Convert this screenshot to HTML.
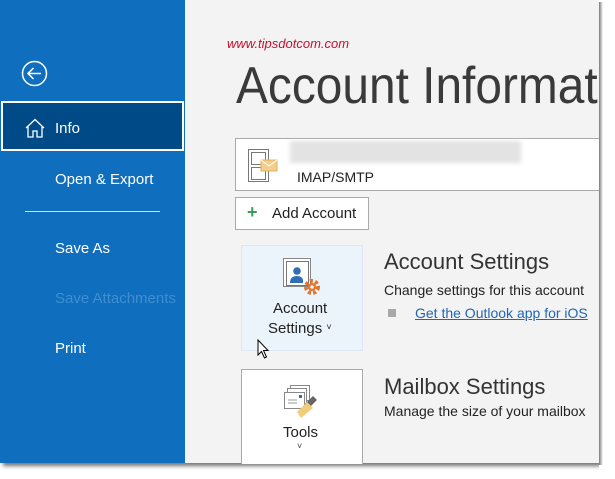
<!DOCTYPE html>
<html><head><meta charset="utf-8"><style>
*{margin:0;padding:0;box-sizing:border-box}
body{width:615px;height:479px;background:#fff;position:relative;overflow:hidden;font-family:"Liberation Sans",sans-serif}
.frame{position:absolute;left:0;top:0;width:599px;height:463px;background:#f3f3f3;box-shadow:3px 3px 4px rgba(0,0,0,.55)}
.nav{position:absolute;left:0;top:0;width:185px;height:463px;background:#106ebe}
.t{position:absolute;white-space:nowrap}
.nav .t{color:#fff;font-size:15px}
</style></head><body>
<div class="frame"></div>
<div class="nav">
<svg style="position:absolute;left:21px;top:60px" width="27" height="27" viewBox="0 0 27 27"><circle cx="13.5" cy="13.5" r="12" fill="none" stroke="#fff" stroke-width="1.5"/><path d="M7 13.5H20M12.5 8L7 13.5L12.5 19" fill="none" stroke="#fff" stroke-width="1.5"/></svg>
<div style="position:absolute;left:1px;top:101px;width:183px;height:50px;background:#004b87;border:2px solid #fff"></div>
<svg style="position:absolute;left:24px;top:117px" width="22" height="22" viewBox="0 0 22 22"><path d="M2 11L11 2.5L20 11M4 9.5V20H9V14H13V20H18V9.5" fill="none" stroke="#fff" stroke-width="1.3"/></svg>
<div class="t" style="left:55px;top:120px">Info</div>
<div class="t" style="left:55px;top:171px">Open &amp; Export</div>
<div style="position:absolute;left:25px;top:211px;width:135px;height:1px;background:#cfe3f5"></div>
<div class="t" style="left:55px;top:240px">Save As</div>
<div class="t" style="left:55px;top:290px;color:#3f8ed3">Save Attachments</div>
<div class="t" style="left:55px;top:340px">Print</div>
</div>
<div class="t" style="left:227px;top:36px;color:#c8102e;font-size:13px;font-style:italic">www.tipsdotcom.com</div>
<div style="position:absolute;left:185px;top:50px;width:414px;height:70px;overflow:hidden"><div class="t" style="left:51px;top:6px;font-size:52px;color:#3a3a3a;transform:scaleX(0.92);transform-origin:0 0">Account Informat</div></div>
<div style="position:absolute;left:235px;top:138px;width:364px;height:53px;background:#fff;border:1px solid #aaa;border-right:none"></div>
<svg style="position:absolute;left:246px;top:147px" width="36" height="38" viewBox="0 0 36 38"><rect x="2.5" y="2.5" width="20" height="32" fill="#fff" stroke="#777"/><rect x="5.5" y="5.5" width="14" height="12" fill="none" stroke="#777"/><rect x="5.5" y="20.5" width="14" height="12" fill="none" stroke="#777"/><rect x="15" y="13" width="16" height="11" fill="#f3cf8c" stroke="#e0b060"/><path d="M15 13L23 19L31 13" fill="none" stroke="#fff"/></svg>
<div style="position:absolute;left:290px;top:141px;width:231px;height:22px;background:#e3e3e3;filter:blur(2px)"></div>
<div class="t" style="left:297px;top:169px;font-size:14px;color:#222">IMAP/SMTP</div>
<div style="position:absolute;left:235px;top:197px;width:134px;height:33px;background:#fff;border:1px solid #aaa"></div>
<div class="t" style="left:247px;top:202px;font-size:18px;color:#3c9a5f;font-weight:bold">+</div>
<div class="t" style="left:272px;top:205px;font-size:15px;color:#222">Add Account</div>
<div style="position:absolute;left:241px;top:245px;width:122px;height:106px;background:#ebf3fb;border:1px solid #dce8f3"></div>
<svg style="position:absolute;left:282px;top:257px" width="42" height="42" viewBox="0 0 42 42"><rect x="1.5" y="1.5" width="27" height="28" fill="#fff" stroke="#888"/><rect x="4.5" y="4.5" width="22" height="24" fill="#fff" stroke="#777"/><circle cx="15" cy="14" r="3.8" fill="#2f6db5"/><path d="M8 26Q8 19 15 19Q20 19 21 23V26Z" fill="#2f6db5"/><circle cx="30" cy="30" r="6" fill="none" stroke="#e2752b" stroke-width="4" stroke-dasharray="3 2.2"/><circle cx="30" cy="30" r="4" fill="#e2752b"/><circle cx="30" cy="30" r="1.8" fill="#ebf3fb"/></svg>
<div class="t" style="left:273px;top:300px;font-size:15px;color:#222">Account</div>
<div class="t" style="left:268px;top:320px;font-size:15px;color:#222">Settings <span style="font-size:9px;position:relative;top:-3px">˅</span></div>
<svg style="position:absolute;left:257px;top:339px" width="14" height="20" viewBox="0 0 14 20"><path d="M1 1V16L4.5 12.5L7.5 19L9.5 18L6.5 11.5H11Z" fill="#fff" stroke="#000"/></svg>
<div class="t" style="left:384px;top:249px;font-size:22px;color:#333">Account Settings</div>
<div class="t" style="left:384px;top:282px;font-size:14px;color:#222">Change settings for this account</div>
<div style="position:absolute;left:388px;top:309px;width:8px;height:8px;background:#a9a9a9"></div>
<div class="t" style="left:415px;top:305px;font-size:14px;color:#1f65b8;text-decoration:underline">Get the Outlook app for iOS</div>
<div style="position:absolute;left:241px;top:369px;width:122px;height:95px;background:#fff;border:1px solid #aaa;border-bottom:none"></div>
<svg style="position:absolute;left:283px;top:384px" width="38" height="38" viewBox="0 0 38 38"><rect x="7.5" y="1.5" width="19" height="15" fill="#fff" stroke="#888"/><rect x="4.5" y="4.5" width="19" height="15" fill="#fff" stroke="#888"/><rect x="1.5" y="8.5" width="20" height="16" fill="#fff" stroke="#888"/><rect x="16" y="11" width="3" height="3" fill="#2f6db5"/><path d="M5 16H14M5 19H14" stroke="#999"/><path d="M18 34L14 28L24 18L30 24Z" fill="#f0cd7a"/><path d="M24 18L30 12L34 16L28 22Z" fill="#666"/></svg>
<div class="t" style="left:283px;top:424px;font-size:15px;color:#222">Tools</div>
<div class="t" style="left:297px;top:441px;font-size:9px;color:#444">˅</div>
<div class="t" style="left:384px;top:374px;font-size:22px;color:#333">Mailbox Settings</div>
<div class="t" style="left:384px;top:403px;font-size:14px;color:#222">Manage the size of your mailbox</div>
<div style="position:absolute;left:599px;top:0;width:16px;height:479px;background:#fff"></div>
<div style="position:absolute;left:599px;top:2px;width:4px;height:463px;background:linear-gradient(90deg,#777,#fff)"></div>
</body></html>
